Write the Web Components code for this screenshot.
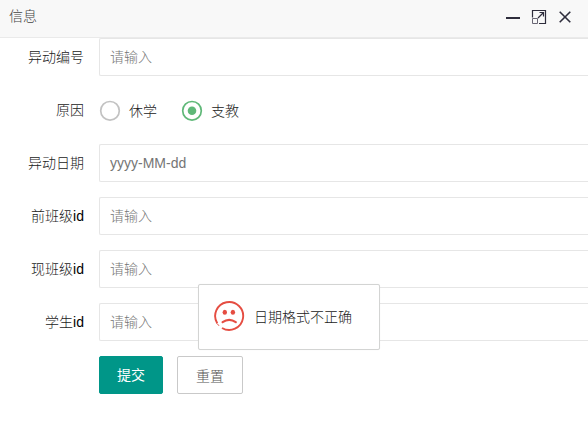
<!DOCTYPE html>
<html lang="zh-CN">
<head>
<meta charset="utf-8">
<title>信息</title>
<style>
html,body{margin:0;height:100%;overflow:hidden;background:#fff}
body{font:300 14px/20px "Liberation Sans","Noto Sans CJK SC",sans-serif;color:#222}
</style>
</head>
<body>
<info-dialog></info-dialog>
<script>
const define = (name, html) => customElements.define(name, class extends HTMLElement {
  constructor() {
    super();
    const t = document.createElement('template');
    t.innerHTML = html;
    this.attachShadow({mode: 'open'}).append(t.content.cloneNode(true));
  }
});

define('title-bar', `
<style>
:host{display:flex;box-sizing:border-box;height:38px;padding:0 15px 5px 9px;background:#f8f8f8;border-bottom:1px solid #eaeaea;align-items:center;justify-content:space-between;color:#444}
svg{display:block;margin-top:2px}
</style>
<span><slot></slot></span>
<svg width="68" height="16" viewBox="505 9 68 16" fill="none" stroke="#2e2d3c">
  <path d="M506 18H520" stroke-width="2"/>
  <path d="M532.5 17.500V10.500H545.500V23.500H539" stroke-width="1.200"/>
  <path d="M532.500 18.500H537.500V23.500H532.500Z" stroke="#696674"/>
  <path d="M538 18L543.500 12.500M539.500 12.500H543.500V16.500" stroke-width="1.200"/>
  <path d="M559.700 11.700L570.300 22.300M570.300 11.700L559.700 22.300" stroke-width="1.600"/>
</svg>`);

define('form-row', `
<style>
:host{display:flex;height:38px;margin-bottom:15px}
.label{box-sizing:border-box;width:99px;padding:9px 15px 9px 0;text-align:right;white-space:nowrap;flex:none}
.field{flex:1;display:flex;min-width:0}
</style>
<div class="label"><slot name="label"></slot></div>
<div class="field"><slot></slot></div>`);

define('text-field', `
<style>
:host{display:block;flex:1;box-sizing:border-box;height:38px;padding:8px 0 8px 10px;border:1px solid #e6e6e6;border-right:0;border-radius:2px 0 0 2px;background:#fff;color:#757575}
</style>
<slot></slot>`);

define('radio-option', `
<style>
:host{display:flex;align-items:center;height:28px;margin:6px 24px 0 0;gap:8px}
svg{display:block}
.dot{display:none}
.ring{stroke:#c2c2c2}
:host([checked]) .ring{stroke:#5fb878}
:host([checked]) .dot{display:block}
</style>
<svg width="22" height="22" viewBox="0 0 22 22"><circle class="ring" cx="11" cy="10.800" r="9.300" fill="none" stroke-width="1.700"/><circle class="dot" cx="11" cy="10.800" r="4.300" fill="#5fb878"/></svg>
<span><slot></slot></span>`);

define('push-button', `
<style>
:host{display:block;box-sizing:border-box;height:38px;padding:9px 18px 7px;border:1px solid #c9c9c9;border-radius:2px;background:#fff;color:#555}
:host([primary]){padding:8px 17px;border-color:#009688;background:#009688;color:#fff;font-weight:400}
</style>
<slot></slot>`);

define('message-toast', `
<style>
:host{position:absolute;left:198px;top:284px;box-sizing:border-box;width:182px;height:66px;border:1px solid #d3d4d3;border-radius:2px;background:#fff;display:flex;align-items:center;padding-left:15px;gap:9px;box-shadow:0 0 1px rgba(0,0,0,.08)}
svg{display:block;margin-top:-2px}
</style>
<svg width="31" height="32" viewBox="0 0 31 32">
  <path d="M3.300 23.400A14 14 0 1 1 8 28" fill="none" stroke="#e54d42" stroke-width="1.900"/>
  <path d="M3.500 24L5 25.800" fill="none" stroke="#e54d42" stroke-width="1"/>
  <ellipse cx="10.800" cy="12.200" rx="2.200" ry="2.500" fill="#e54d42"/>
  <ellipse cx="18.900" cy="12.200" rx="2.200" ry="2.500" fill="#e54d42"/>
  <path d="M8.600 22.200Q15.200 17.600 21.800 22.200" fill="none" stroke="#e54d42" stroke-width="2.200" stroke-linecap="round"/>
</svg>
<span><slot></slot></span>`);

define('info-dialog', `
<style>
:host{display:block;height:427px;position:relative;overflow:hidden}
.actions{display:flex;gap:14px;padding-left:99px}
b{font-weight:400;color:#000}
</style>
<title-bar>信息</title-bar>
<form-row><span slot="label">异动编号</span><text-field>请输入</text-field></form-row>
<form-row><span slot="label">原因</span><radio-option>休学</radio-option><radio-option checked>支教</radio-option></form-row>
<form-row><span slot="label">异动日期</span><text-field>yyyy-MM-dd</text-field></form-row>
<form-row><span slot="label">前班级<b>id</b></span><text-field>请输入</text-field></form-row>
<form-row><span slot="label">现班级<b>id</b></span><text-field>请输入</text-field></form-row>
<form-row><span slot="label">学生<b>id</b></span><text-field>请输入</text-field></form-row>
<div class="actions"><push-button primary>提交</push-button><push-button>重置</push-button></div>
<message-toast>日期格式不正确</message-toast>`);
</script>
</body>
</html>
